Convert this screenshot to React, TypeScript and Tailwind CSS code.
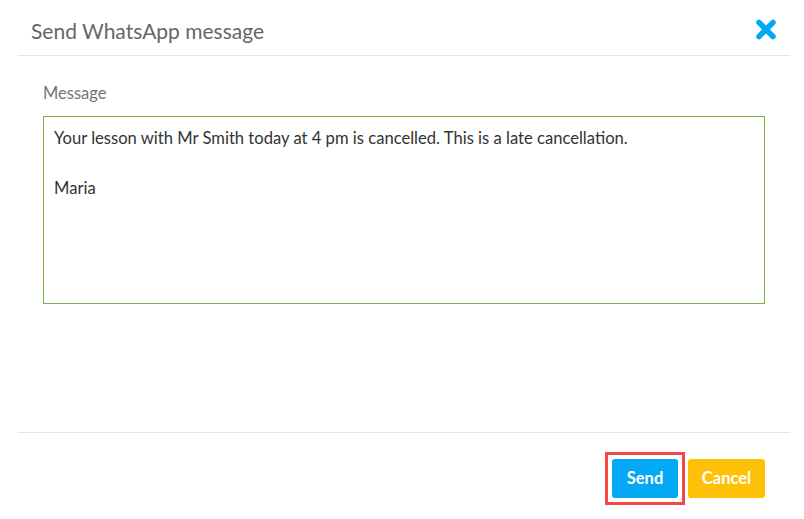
import React from "react";

export default function App() {
  return (
    <div className="w-[804px] h-[519px] bg-white overflow-hidden" style={{ fontFamily: "Lato, 'Noto Sans', sans-serif" }}>
      <div className="ml-[18px] mr-[14px] flex flex-col h-full">
        <div className="h-[56px] border-b border-[#e5e5e5] flex items-center justify-between pl-[13px] pr-[13px] pt-[6px]">
          <h1 className="text-[21px] text-[#666666] leading-none">Send WhatsApp message</h1>
          <svg width="22" height="21" viewBox="0 0 22 21" className="mt-[-2px]">
            <path d="M4 3.5 L18 17.5 M18 3.5 L4 17.5" stroke="#03a9f4" strokeWidth="5.5" strokeLinecap="round" />
          </svg>
        </div>
        <div className="h-[377px] border-b border-[#e5e5e5] px-[25px] pt-[25px]">
          <label className="block text-[16.5px] text-[#757575] leading-[24px]">Message</label>
          <div className="mt-[11px] h-[188px] border border-[#7cb342] px-[10px] pt-[9px] text-[16.6px] text-[#333333] leading-[25px]">
            <div>Your lesson with Mr Smith today at 4 pm is cancelled. This is a late cancellation.</div>
            <div>&nbsp;</div>
            <div>Maria</div>
          </div>
        </div>
        <div className="flex justify-end pr-[25px] pt-[26px] gap-[10px]">
          <div className="relative">
            <span className="absolute -inset-[7px] border-[3px] border-[#f44747] pointer-events-none"></span>
            <button className="w-[66px] h-[39px] rounded-[3px] bg-[#03a9f4] text-white font-bold text-[16.5px]">Send</button>
          </div>
          <button className="w-[77px] h-[39px] rounded-[3px] bg-[#ffc107] text-white font-bold text-[16.5px]">Cancel</button>
        </div>
      </div>
    </div>
  );
}
